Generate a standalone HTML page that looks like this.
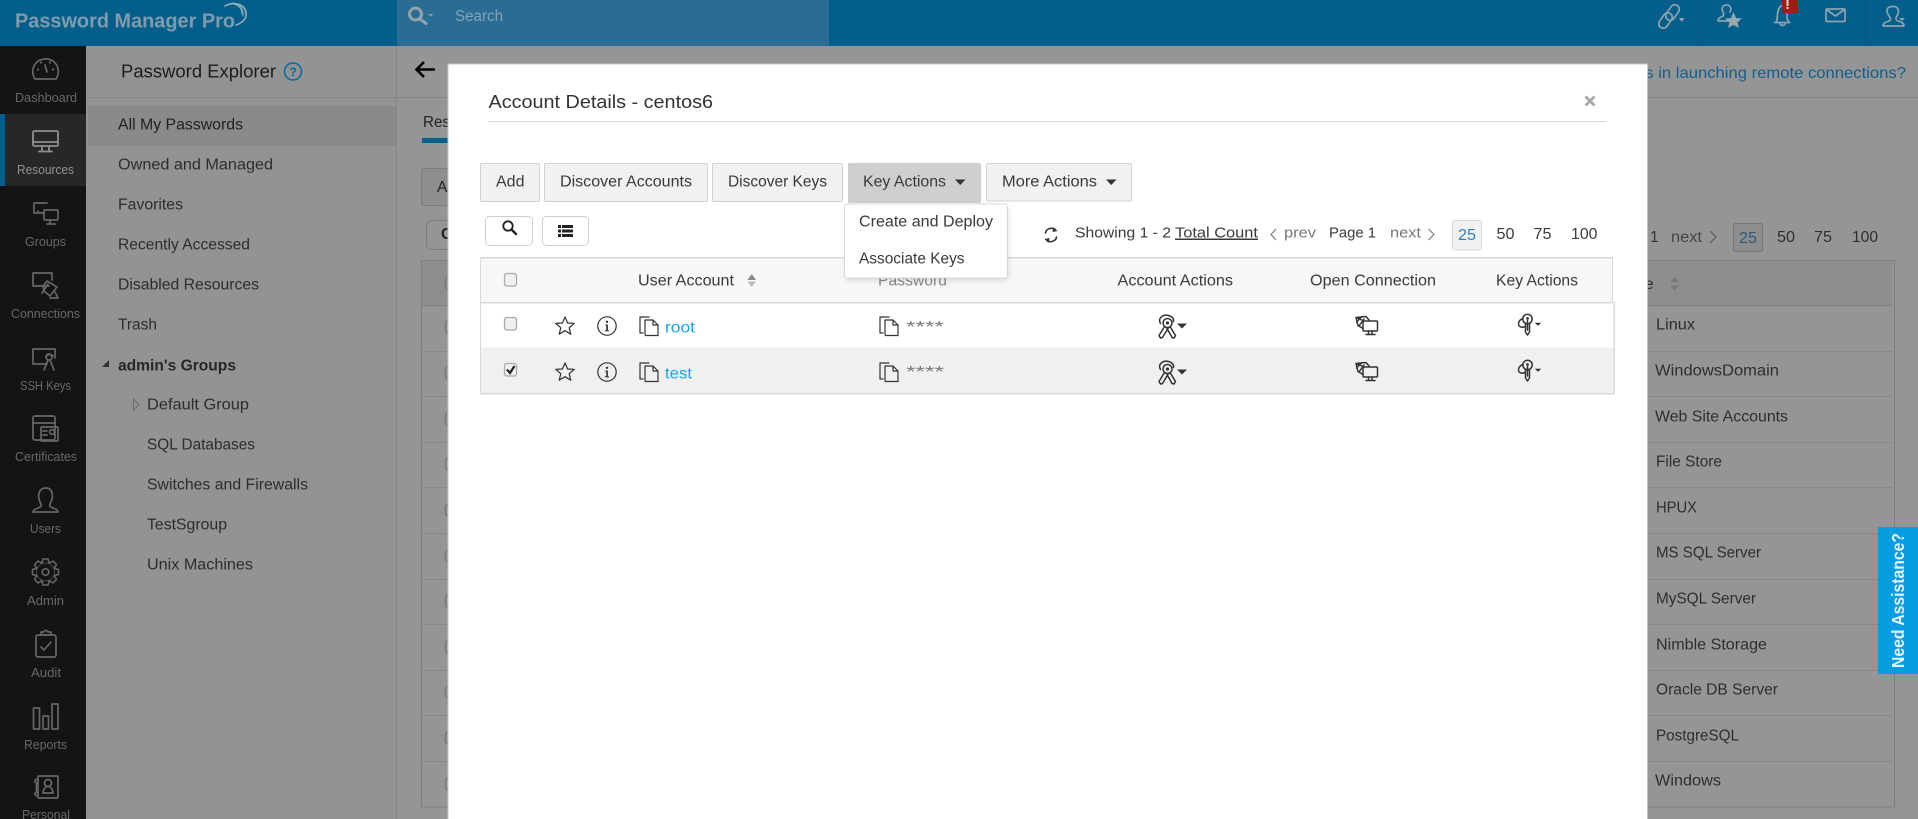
<!DOCTYPE html>
<html>
<head>
<meta charset="utf-8">
<title>Password Manager Pro</title>
<style>
html,body{margin:0;padding:0;width:1918px;height:819px;overflow:hidden;background:#949494}
svg{display:block}
text{font-family:"Liberation Sans",sans-serif;white-space:pre}
.s{font-size:12.5px;fill:#686868}
.p{font-size:15.5px;fill:#2d2d2d}
.r{font-size:15.5px;fill:#2e2e2e}
.m{font-size:15.5px;fill:#3a3a3a}
.i{fill:none;stroke:#666;stroke-width:1.7;stroke-linejoin:round;stroke-linecap:round}
.t{fill:none;stroke:#8fa3ad;stroke-width:1.7;stroke-linejoin:round;stroke-linecap:round}
.d{fill:none;stroke:#333;stroke-width:1.2;stroke-linejoin:round;stroke-linecap:round}
.k{fill:none;stroke:#333;stroke-width:1.5;stroke-linejoin:round;stroke-linecap:round}
</style>
</head>
<body>
<svg width="1918" height="819" viewBox="0 0 1918 819" xmlns="http://www.w3.org/2000/svg">
<defs>
<g id="star"><path class="d" d="M0-9L2.6-3 9.2-2.6 4.2 1.7 5.8 8.2 0 4.7-5.8 8.2-4.2 1.7-9.2-2.6-2.6-3Z" stroke-width="1.4"/></g>
<g id="info"><circle class="d" r="9.2"/><path d="M-1.8-1.5H.9V4.4H2.2V5.4H-2.2V4.4H-.8V-.5H-1.8Z" fill="#333"/><circle cy="-4.2" r="1.2" fill="#333"/></g>
<g id="copy"><path class="d" d="M6 18.500V4H14L19 9V19.500H6.500ZM14 4V9H19M4 17H1V1H10"/></g>
<g id="keys"><path class="k" d="M2.500 8.500C-.5 3 5-1 10.500 .5 14 1.500 16 3.500 15.500 6.500"/><circle class="k" cx="9.500" cy="8" r="4.500"/><circle cx="9.500" cy="8" r="1.600" fill="#333"/><path class="k" d="M6.500 11.500L1 20.500 2.500 23 4.500 22.500 10.500 12.500M12 11.500L17.500 20.500 16 23 14 22.500 8.500 12.500"/><path d="M19 8.500H29L24 13.500Z" fill="#333"/></g>
<g id="conn"><path class="k" d="M1 1.500L3 9.500 8 12.500M1 1.500L9 5M1 1.500L11 .5 14 4M1.500 6L7 .5M4 10L9 3" stroke-width="1.200"/><rect class="k" x="8" y="5" width="14.500" height="10" rx="1" fill="#fff" fill-opacity="0" stroke-width="1.300"/><path class="k" d="M13.500 15V18M17 15V18M11 18.500H20" stroke-width="1.200"/></g>
<g id="key"><circle class="k" cx="9.500" cy="5" r="4.700" stroke-width="1.300"/><circle cx="9.500" cy="4.500" r="1.400" fill="#333"/><path class="k" d="M7.500 9.500V18L9.500 21 11.500 18V9.500M9.500 6.500V16M5 4.500C0 6 -1 12 3 13 5 13.500 6.500 13 7.500 12" stroke-width="1.200"/><path d="M16.700 8.700H23.300L20 11.700Z" fill="#333"/></g>
<g id="tooth"><path d="M-3.600-9.200L-2.500-13H2.500L3.600-9.200" fill="#141414" stroke="#666" stroke-width="1.600" stroke-linejoin="round"/></g>
</defs>

<!-- backgrounds -->
<rect width="1918" height="819" fill="#959595"/>
<rect width="1918" height="46" fill="#035e8c"/>
<rect x="397" width="432" height="46" fill="#2a6c93"/>
<rect x="1701" width="1" height="46" fill="#04557f"/>
<rect x="1865" width="1" height="46" fill="#04557f"/>
<rect y="46" width="86" height="773" fill="#141414"/>
<rect y="114" width="86" height="72" fill="#272727"/>
<rect y="114" width="5" height="72" fill="#035e8c"/>
<rect x="86" y="46" width="311" height="773" fill="#939393"/>
<rect x="396" y="46" width="1" height="773" fill="#868686"/>
<rect x="86" y="97" width="1832" height="1" fill="#858585"/>
<rect x="88" y="106" width="308" height="40" fill="#8a8a8a"/>

<!-- logo -->
<text x="15" y="27.500" font-size="20" font-weight="bold" fill="#809bab" textLength="220" lengthAdjust="spacingAndGlyphs">Password Manager Pro</text>
<g fill="none" stroke="#97adba" stroke-linecap="round">
<path d="M225 6C234 1 245 4 246 13 247 19 242 23 236 25" stroke-width="1.600"/>
<path d="M229 4C237 3 242 8 242 14" stroke-width="1"/>
<path d="M233 3C240 4 244 9 243 16" stroke-width="1"/>
</g>

<!-- search -->
<g fill="none" stroke="#8fa3ad" stroke-width="3"><circle cx="415.500" cy="14" r="6"/><path d="M420 19L426 23.500" stroke-linecap="round"/></g>
<path d="M428 14H433.500L430.700 16.500Z" fill="#8fa3ad"/>
<text x="455" y="21" font-size="15.500" fill="#84a3b6" textLength="48" lengthAdjust="spacingAndGlyphs">Search</text>

<!-- top right icons -->
<g class="t" stroke-width="1.900">
<rect class="t" x="-4.500" y="-8.500" width="9" height="17" rx="4.500" transform="translate(1672.500,12.500) rotate(35)"/>
<rect class="t" x="-4.500" y="-8.500" width="9" height="17" rx="4.500" transform="translate(1665.500,20.500) rotate(35)"/>
<path class="t" d="M1728 21H1718C1718 18 1721 17 1723 16 1724 15 1724 14 1723 12 1721 8 1723 5 1726.500 5 1730 5 1732 8 1730 12"/>
<path class="t" d="M1776 22.500C1778 19 1777 14 1778 11 1779 7 1781 5.500 1783 5.500M1774.500 22.500H1789.500M1780 23.500C1780 26 1785 26 1785 23.500M1787 14V19L1789.500 22.500"/>
<rect class="t" x="1826" y="9" width="19" height="12.500" rx="1"/>
<path class="t" d="M1827 10L1835.500 16 1844 10"/>
<path class="t" d="M1889 16C1885 10 1887 7 1892 6.500 1898 6 1900 10 1897 16 1895 19 1896 20 1898 21 1901 22 1904 23 1904 26H1883C1883 23 1886 22 1889 21 1891 20 1891 18 1889 16Z"/>
</g>
<path d="M1679 18H1684.500L1681.700 22Z" fill="#8fa3ad"/>
<path d="M1733.500 12L1736 18 1742 18.500 1737.500 22.500 1739 28 1733.500 25 1728 28 1729.500 22.500 1725 18.500 1731 18Z" fill="#98a8b0"/>
<rect x="1782" y="-4" width="16" height="17" rx="2" fill="#a01d12"/>
<rect x="1786.500" y="0" width="2" height="6" fill="#dcdcdc"/><rect x="1786.500" y="7" width="2" height="2" fill="#dcdcdc"/>
<path d="M1899 18H1905L1902 21Z" fill="#8fa3ad"/>

<!-- sidebar icons -->
<g class="i">
<path class="i" d="M35 79C32 74 32 70 34 66 37 60 42 59 46 59 52 59 57 63 58 69 59 73 58 76 56 79Z"/><path class="i" d="M45 65L47 72M38 69V70M53 69V70M41 62V63M50 62V63"/>
</g>
<g fill="none" stroke="#909090" stroke-width="1.800" stroke-linecap="round">
<rect x="33" y="131" width="25" height="15" rx="1.500"/><path d="M33 142H58M42 147V151M49 147V151M39 151.500H52"/>
</g>
<g class="i">
<path class="i" d="M47 203H34V213H43M38 213V211"/><rect class="i" x="44" y="210" width="14" height="10" rx="1"/><path class="i" d="M50 221V223M47 224H55"/>
<path class="i" d="M49 286H33V273H52V280"/><path class="i" d="M43 286L47 281 57 287 50 296 44 291ZM42 293L48 284M55 292L58 298H50"/>
<path class="i" d="M47 364H33V349H55V358"/><circle class="i" cx="49" cy="357" r="3"/><path class="i" d="M48 360L44 370M50 360L54 370M46 358C46 355 50 353 53 356"/>
<rect class="i" x="33" y="416" width="22" height="24" rx="2"/><path class="i" d="M33 423H55"/><rect class="i" x="41" y="427" width="17" height="14" rx="1" fill="#141414"/><path class="i" d="M43 431H47M43 435H47"/><circle class="i" cx="52" cy="432" r="2.400"/>
<path class="i" d="M41 504C37 497 38 488 46 488 53 488 54 497 50 504 49 507 51 507 53 508 56 509 58 510 58 512H33C33 510 35 509 38 508 40 507 42 507 41 504Z"/>
<circle cx="45.500" cy="572" r="9.500" fill="none" stroke="#666" stroke-width="1.600"/>
<circle cx="45.500" cy="572" r="3.300" fill="none" stroke="#666" stroke-width="1.600"/>
<use href="#tooth" transform="translate(45.500,572)"/>
<use href="#tooth" transform="translate(45.500,572) rotate(45)"/>
<use href="#tooth" transform="translate(45.500,572) rotate(90)"/>
<use href="#tooth" transform="translate(45.500,572) rotate(135)"/>
<use href="#tooth" transform="translate(45.500,572) rotate(180)"/>
<use href="#tooth" transform="translate(45.500,572) rotate(225)"/>
<use href="#tooth" transform="translate(45.500,572) rotate(270)"/>
<use href="#tooth" transform="translate(45.500,572) rotate(315)"/>
<rect class="i" x="36" y="635" width="20" height="22" rx="2"/><path class="i" d="M41 635V632H44C44 630 47 630 48 632H51V635H41ZM41 647L44 650 51 642"/>
<rect class="i" x="33.500" y="708" width="6" height="21"/><rect class="i" x="43" y="716" width="5.500" height="13"/><rect class="i" x="52" y="704" width="6" height="25"/>
<rect class="i" x="38" y="776" width="20" height="22" rx="1"/><circle class="i" cx="48" cy="783" r="3.500"/><path class="i" d="M43 793C43 789 45 788 46 787M53 793C53 789 51 788 50 787M43 793H53"/><circle class="i" cx="36.500" cy="781" r="1.700"/><circle class="i" cx="36.500" cy="794" r="1.700"/><path class="i" d="M36.500 783V792"/>
</g>

<!-- sidebar labels -->
<text class="s" x="15" y="102" textLength="62" lengthAdjust="spacingAndGlyphs">Dashboard</text>
<text class="s" x="17" y="174" textLength="57" lengthAdjust="spacingAndGlyphs" style="fill:#929292">Resources</text>
<text class="s" x="25" y="246" textLength="41" lengthAdjust="spacingAndGlyphs">Groups</text>
<text class="s" x="11" y="318" textLength="69" lengthAdjust="spacingAndGlyphs">Connections</text>
<text class="s" x="20" y="390" textLength="51" lengthAdjust="spacingAndGlyphs">SSH Keys</text>
<text class="s" x="15" y="461" textLength="62" lengthAdjust="spacingAndGlyphs">Certificates</text>
<text class="s" x="30" y="533" textLength="31" lengthAdjust="spacingAndGlyphs">Users</text>
<text class="s" x="27" y="605" textLength="37" lengthAdjust="spacingAndGlyphs">Admin</text>
<text class="s" x="31" y="677" textLength="30" lengthAdjust="spacingAndGlyphs">Audit</text>
<text class="s" x="24" y="749" textLength="43" lengthAdjust="spacingAndGlyphs">Reports</text>
<text class="s" x="22" y="819" textLength="48" lengthAdjust="spacingAndGlyphs">Personal</text>

<!-- panel -->
<text x="121" y="77.500" font-size="18" fill="#1c1c1c" textLength="155" lengthAdjust="spacingAndGlyphs">Password Explorer</text>
<circle cx="293" cy="71.500" r="8.500" fill="none" stroke="#0d6a9f" stroke-width="1.600"/>
<text x="289.500" y="76" font-size="12" font-weight="bold" fill="#0d6a9f">?</text>
<text class="p" x="118" y="129.500" style="fill:#1f1f1f" textLength="125" lengthAdjust="spacingAndGlyphs">All My Passwords</text>
<text class="p" x="118" y="169.500" textLength="155" lengthAdjust="spacingAndGlyphs">Owned and Managed</text>
<text class="p" x="118" y="209.500" textLength="65" lengthAdjust="spacingAndGlyphs">Favorites</text>
<text class="p" x="118" y="249.500" textLength="132" lengthAdjust="spacingAndGlyphs">Recently Accessed</text>
<text class="p" x="118" y="289.500" textLength="141" lengthAdjust="spacingAndGlyphs">Disabled Resources</text>
<text class="p" x="118" y="329.500" textLength="39" lengthAdjust="spacingAndGlyphs">Trash</text>
<path d="M109 360V367H102Z" fill="#333"/>
<text class="p" x="118" y="370.500" style="font-weight:bold;fill:#262626" textLength="118" lengthAdjust="spacingAndGlyphs">admin's Groups</text>
<path d="M133.500 399L139 404.500 133.500 410Z" fill="none" stroke="#6a6a6a"/>
<text class="p" x="147" y="409.500" textLength="102" lengthAdjust="spacingAndGlyphs">Default Group</text>
<text class="p" x="147" y="449.500" textLength="108" lengthAdjust="spacingAndGlyphs">SQL Databases</text>
<text class="p" x="147" y="489.500" textLength="161" lengthAdjust="spacingAndGlyphs">Switches and Firewalls</text>
<text class="p" x="147" y="529.500" textLength="80" lengthAdjust="spacingAndGlyphs">TestSgroup</text>
<text class="p" x="147" y="569.500" textLength="106" lengthAdjust="spacingAndGlyphs">Unix Machines</text>

<!-- main behind -->
<path d="M417 69.500H435M424 62L416.500 69.500 424 77" fill="none" stroke="#000" stroke-width="2.600"/>
<text x="423" y="127" font-size="15.500" fill="#222" textLength="27" lengthAdjust="spacingAndGlyphs">Res</text>
<rect x="422" y="138" width="30" height="5" fill="#035e8c"/>
<rect x="421.500" y="168.500" width="40" height="37" rx="2" fill="#8e8e8e" stroke="#7c7c7c"/>
<text x="437" y="192" font-size="15.500" fill="#222">A</text>
<rect x="426.500" y="220.500" width="40" height="29" rx="5" fill="none" stroke="#7c7c7c"/>
<text x="441" y="239" font-size="15.500" font-weight="bold" fill="#222">C</text>
<rect x="421.500" y="260.500" width="1473" height="546.500" fill="none" stroke="#7e7e7e"/>
<rect x="422" y="261" width="1470" height="44" fill="#8e8e8e"/>
<g fill="#868686">
<rect x="421" y="305" width="1471" height="1" fill="#7f7f7f"/>
<rect x="421" y="351" width="1471" height="1"/><rect x="421" y="396" width="1471" height="1"/>
<rect x="421" y="442" width="1471" height="1"/><rect x="421" y="487" width="1471" height="1"/>
<rect x="421" y="533" width="1471" height="1"/><rect x="421" y="579" width="1471" height="1"/>
<rect x="421" y="624" width="1471" height="1"/><rect x="421" y="670" width="1471" height="1"/>
<rect x="421" y="715" width="1471" height="1"/><rect x="421" y="761" width="1471" height="1"/>
</g>
<g fill="none" stroke="#777" stroke-width="1.500">
<rect x="445.500" y="277" width="12" height="12" rx="3"/><rect x="445.500" y="321" width="12" height="12" rx="3"/>
<rect x="445.500" y="367" width="12" height="12" rx="3"/><rect x="445.500" y="413" width="12" height="12" rx="3"/>
<rect x="445.500" y="458" width="12" height="12" rx="3"/><rect x="445.500" y="504" width="12" height="12" rx="3"/>
<rect x="445.500" y="550" width="12" height="12" rx="3"/><rect x="445.500" y="595" width="12" height="12" rx="3"/>
<rect x="445.500" y="641" width="12" height="12" rx="3"/><rect x="445.500" y="686" width="12" height="12" rx="3"/>
<rect x="445.500" y="732" width="12" height="12" rx="3"/><rect x="445.500" y="778" width="12" height="12" rx="3"/>
</g>

<!-- behind right -->
<text x="1636" y="78" font-size="16" fill="#0f5f90" textLength="270" lengthAdjust="spacingAndGlyphs">ns in launching remote connections?</text>
<text x="1650" y="242" font-size="15.500" fill="#333">1</text>
<text x="1671" y="242" font-size="15.500" fill="#444" textLength="31" lengthAdjust="spacingAndGlyphs">next</text>
<path d="M1710 231L1716 237 1710 243" fill="none" stroke="#555" stroke-width="1.100"/>
<rect x="1733.500" y="223.500" width="29" height="28" rx="2" fill="#8d8d8d" stroke="#757575"/>
<text x="1739" y="243" font-size="15.500" fill="#2a5a7d" textLength="18" lengthAdjust="spacingAndGlyphs">25</text>
<text x="1777" y="242" font-size="15.500" fill="#2f2f2f" textLength="18" lengthAdjust="spacingAndGlyphs">50</text>
<text x="1814" y="242" font-size="15.500" fill="#2f2f2f" textLength="18" lengthAdjust="spacingAndGlyphs">75</text>
<text x="1852" y="242" font-size="15.500" fill="#2f2f2f" textLength="26" lengthAdjust="spacingAndGlyphs">100</text>
<text x="1645" y="289" font-size="15.500" fill="#2e2e2e">e</text>
<path d="M1670 282L1674.500 277 1679 282ZM1670 285.500H1679L1674.500 290.500Z" fill="#7a7a7a"/>
<text class="r" x="1656" y="329.500" textLength="39" lengthAdjust="spacingAndGlyphs">Linux</text>
<text class="r" x="1655" y="375.500" textLength="124" lengthAdjust="spacingAndGlyphs">WindowsDomain</text>
<text class="r" x="1655" y="421.500" textLength="133" lengthAdjust="spacingAndGlyphs">Web Site Accounts</text>
<text class="r" x="1656" y="466.500" textLength="66" lengthAdjust="spacingAndGlyphs">File Store</text>
<text class="r" x="1656" y="512.500" textLength="41" lengthAdjust="spacingAndGlyphs">HPUX</text>
<text class="r" x="1656" y="557.500" textLength="105" lengthAdjust="spacingAndGlyphs">MS SQL Server</text>
<text class="r" x="1656" y="603.500" textLength="100" lengthAdjust="spacingAndGlyphs">MySQL Server</text>
<text class="r" x="1656" y="649.500" textLength="111" lengthAdjust="spacingAndGlyphs">Nimble Storage</text>
<text class="r" x="1656" y="694.500" textLength="122" lengthAdjust="spacingAndGlyphs">Oracle DB Server</text>
<text class="r" x="1656" y="740.500" textLength="83" lengthAdjust="spacingAndGlyphs">PostgreSQL</text>
<text class="r" x="1655" y="785.500" textLength="66" lengthAdjust="spacingAndGlyphs">Windows</text>

<!-- need assistance -->
<rect x="1878" y="527" width="40" height="147" fill="#089ce3"/>
<text transform="translate(1904,668) rotate(-90)" font-size="17.500" font-weight="bold" fill="#e6f6ff" textLength="135" lengthAdjust="spacingAndGlyphs">Need Assistance?</text>

<!-- modal -->
<rect x="448" y="64" width="1199.500" height="770" fill="#fff" stroke="#c6c6c6" stroke-width="1"/>
<text x="488.500" y="108" font-size="18" fill="#333" textLength="224.500" lengthAdjust="spacingAndGlyphs">Account Details - centos6</text>
<rect x="488" y="121" width="1119" height="1" fill="#d9d9d9"/>
<path d="M1585.500 96.500L1594.500 105.500M1594.500 96.500L1585.500 105.500" stroke="#a9a9a9" stroke-width="2.800"/>

<!-- buttons -->
<g fill="#f1f1f1" stroke="#d2d2d2">
<rect x="480.500" y="163.500" width="59" height="38" rx="1.500"/>
<rect x="544.500" y="163.500" width="163" height="38" rx="1.500"/>
<rect x="712.500" y="163.500" width="130" height="38" rx="1.500"/>
<rect x="986.500" y="163.500" width="145" height="37.500" rx="1.500"/>
</g>
<rect x="848" y="163" width="133" height="40" rx="1.500" fill="#cfcfcf"/>
<text class="m" x="496" y="186.500" textLength="28.500" lengthAdjust="spacingAndGlyphs">Add</text>
<text class="m" x="560" y="186.500" textLength="132" lengthAdjust="spacingAndGlyphs">Discover Accounts</text>
<text class="m" x="728" y="186.500" textLength="99" lengthAdjust="spacingAndGlyphs">Discover Keys</text>
<text class="m" x="863" y="186.500" textLength="83" lengthAdjust="spacingAndGlyphs">Key Actions</text>
<text class="m" x="1002" y="186.500" textLength="95" lengthAdjust="spacingAndGlyphs">More Actions</text>
<path d="M955 179.500H965.500L960.200 185Z" fill="#333"/>
<path d="M1106 179.500H1116.500L1111.200 185Z" fill="#333"/>

<rect x="485.500" y="216.500" width="47" height="29" rx="4" fill="#fff" stroke="#cfcfcf"/>
<rect x="542.500" y="216.500" width="46" height="29" rx="4" fill="#fff" stroke="#cfcfcf"/>
<g fill="none" stroke="#222"><circle cx="508" cy="226" r="4.700" stroke-width="1.800"/><path d="M511.500 229.500L516 234" stroke-width="2.400" stroke-linecap="round"/></g>
<g fill="#222"><rect x="558" y="225" width="3" height="3"/><rect x="562" y="225" width="11" height="3"/><rect x="558" y="229.500" width="3" height="3"/><rect x="562" y="229.500" width="11" height="3"/><rect x="558" y="234" width="3" height="3"/><rect x="562" y="234" width="11" height="3"/></g>

<!-- pagination -->
<g fill="none" stroke="#333" stroke-width="1.600" stroke-linecap="round">
<path d="M1045.500 233C1046 229 1051 227 1055 229.500M1056.500 237C1056 241 1051 243 1047 240.500"/>
</g>
<path d="M1053.500 227L1057.500 231 1052.500 232ZM1048.500 243L1044.500 239 1049.500 238Z" fill="#333"/>
<text x="1075" y="237.500" font-size="15" fill="#3a3a3a" textLength="96" lengthAdjust="spacingAndGlyphs">Showing 1 - 2</text>
<text x="1175" y="237.500" font-size="15" fill="#3a3a3a" textLength="83" lengthAdjust="spacingAndGlyphs" text-decoration="underline">Total Count</text>
<path d="M1276 229L1271 234.500 1276 240" fill="none" stroke="#777" stroke-width="1.100"/>
<text x="1284" y="237.500" font-size="15" fill="#777" textLength="32" lengthAdjust="spacingAndGlyphs">prev</text>
<text x="1329" y="237.500" font-size="15" fill="#3a3a3a" textLength="47" lengthAdjust="spacingAndGlyphs">Page 1</text>
<text x="1390" y="237.500" font-size="15" fill="#777" textLength="31" lengthAdjust="spacingAndGlyphs">next</text>
<path d="M1428.500 229L1434 234.500 1428.500 240" fill="none" stroke="#777" stroke-width="1.100"/>
<rect x="1452.500" y="220.500" width="29" height="29.500" rx="2.500" fill="#f1f1f1" stroke="#d8d8d8"/>
<text x="1458" y="240" font-size="15.500" fill="#2b7ec2" textLength="18" lengthAdjust="spacingAndGlyphs">25</text>
<text x="1496.500" y="239" font-size="15.500" fill="#3a3a3a" textLength="18" lengthAdjust="spacingAndGlyphs">50</text>
<text x="1533.500" y="239" font-size="15.500" fill="#3a3a3a" textLength="18" lengthAdjust="spacingAndGlyphs">75</text>
<text x="1571" y="239" font-size="15.500" fill="#3a3a3a" textLength="26.500" lengthAdjust="spacingAndGlyphs">100</text>

<!-- table -->
<rect x="480.500" y="257.500" width="1132" height="44.500" fill="#f7f7f7"/>
<rect x="480" y="347.500" width="1134" height="45.500" fill="#f0f0f0"/>
<g fill="#d9d9d9">
<rect x="480" y="257" width="1132" height="1.500"/>
<rect x="480" y="302" width="1132" height="1.500"/>
<rect x="480" y="393" width="1134.500" height="1.500"/>
<rect x="480" y="257" width="1" height="137"/>
<rect x="1613.500" y="302" width="1.500" height="92"/>
<rect x="1612" y="257" width="1" height="46"/>
</g>
<g fill="#f0f0f0" stroke="#a9a9a9" stroke-width="1.300">
<rect x="504.500" y="273.500" width="12" height="12.500" rx="2.500"/>
<rect x="504.500" y="317.500" width="12" height="12.500" rx="2.500"/>
<rect x="504.500" y="363.500" width="12" height="12.500" rx="2.500"/>
</g>
<path d="M507 369.500L510 373 514.500 366" fill="none" stroke="#222" stroke-width="2.200"/>
<text class="m" x="638" y="285.500" textLength="96" lengthAdjust="spacingAndGlyphs">User Account</text>
<path d="M747.500 280L751.800 274 756 280Z" fill="#888"/><path d="M747.500 281.500H756L751.800 287Z" fill="#bbb"/>
<text x="878" y="285.500" font-size="15.500" fill="#888" textLength="69" lengthAdjust="spacingAndGlyphs">Password</text>
<text class="m" x="1117.500" y="285.500" textLength="115.500" lengthAdjust="spacingAndGlyphs">Account Actions</text>
<text class="m" x="1310" y="285.500" textLength="126" lengthAdjust="spacingAndGlyphs">Open Connection</text>
<text class="m" x="1496" y="285.500" textLength="82" lengthAdjust="spacingAndGlyphs">Key Actions</text>

<use href="#star" x="565" y="326"/><use href="#star" x="565" y="372"/>
<use href="#info" x="607" y="326"/><use href="#info" x="607" y="372"/>
<use href="#copy" x="639" y="316"/><use href="#copy" x="639" y="362"/>
<use href="#copy" x="879" y="316"/><use href="#copy" x="879" y="362"/>
<text x="665" y="332.500" font-size="15.500" fill="#1ba3ec" textLength="30" lengthAdjust="spacingAndGlyphs">root</text>
<text x="665" y="378.500" font-size="15.500" fill="#1ba3ec" textLength="27" lengthAdjust="spacingAndGlyphs">test</text>
<text x="906" y="332" font-size="15.500" fill="#777" textLength="38" lengthAdjust="spacingAndGlyphs">****</text>
<text x="906" y="377" font-size="15.500" fill="#777" textLength="38" lengthAdjust="spacingAndGlyphs">****</text>
<use href="#keys" x="1158" y="315"/><use href="#keys" x="1158" y="361"/>
<use href="#conn" x="1355" y="316"/><use href="#conn" x="1355" y="362"/>
<use href="#key" x="1518" y="314"/><use href="#key" x="1518" y="360"/>

<!-- dropdown -->
<rect x="846" y="207" width="162" height="73" rx="3" fill="#000" opacity=".14" style="filter:blur(3px)"/>
<rect x="844.500" y="204" width="163" height="74" rx="2.500" fill="#fff" stroke="#d8d8d8"/>
<text class="m" x="859" y="226.500" textLength="134" lengthAdjust="spacingAndGlyphs">Create and Deploy</text>
<text class="m" x="859" y="263.500" textLength="105.500" lengthAdjust="spacingAndGlyphs">Associate Keys</text>
</svg>
</body>
</html>
